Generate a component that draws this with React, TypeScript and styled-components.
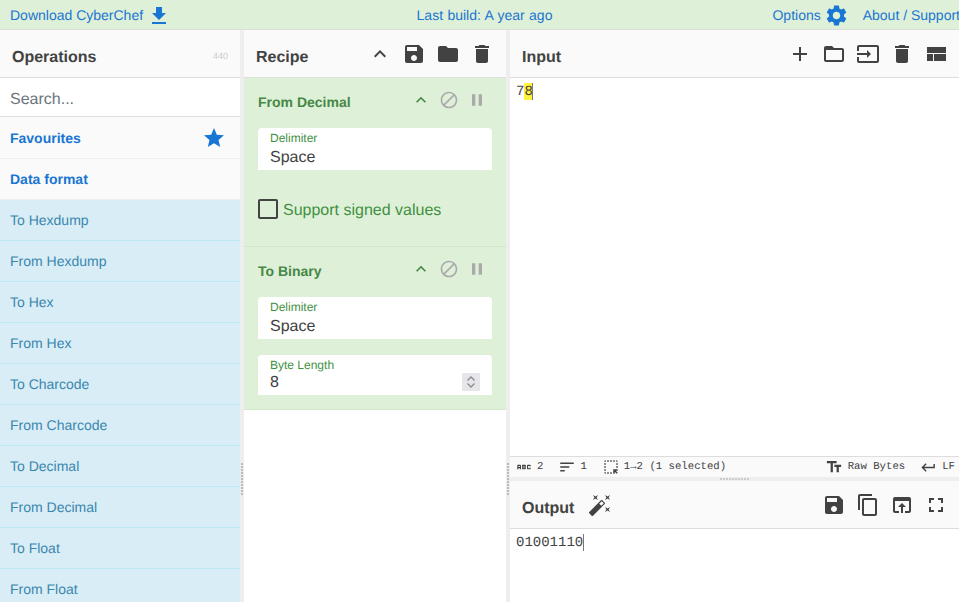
import React from "react";
import styled, { createGlobalStyle } from "styled-components";

const Global = createGlobalStyle`
  html, body { margin: 0; padding: 0; height: 100%; overflow: hidden; }
  body { font-family: "Liberation Sans", Arial, sans-serif; color: #424242; background: #fff; text-rendering: geometricPrecision; }
  * { box-sizing: border-box; }
`;

const P = {
  save: "M17 3H5c-1.11 0-2 .9-2 2v14c0 1.1.89 2 2 2h14c1.1 0 2-.9 2-2V7l-4-4zm-5 16c-1.66 0-3-1.34-3-3s1.34-3 3-3 3 1.34 3 3-1.34 3-3 3zm3-10H5V5h10v4z",
  folder: "M10 4H4c-1.1 0-1.99.9-1.99 2L2 18c0 1.1.9 2 2 2h16c1.1 0 2-.9 2-2V8c0-1.1-.9-2-2-2h-8l-2-2z",
  del: "M6 19c0 1.1.9 2 2 2h8c1.1 0 2-.9 2-2V7H6v12zM19 4h-3.5l-1-1h-5l-1 1H5v2h14V4z",
  less: "M12 8l-6 6 1.41 1.41L12 10.83l4.59 4.58L18 14z",
  add: "M19 13h-6v6h-2v-6H5v-2h6V5h2v6h6v2z",
  open: "M20 6h-8l-2-2H4c-1.1 0-1.99.9-1.99 2L2 18c0 1.1.9 2 2 2h16c1.1 0 2-.9 2-2V8c0-1.1-.9-2-2-2zm0 12H4V8h16v10z",
  input: "M21 3.01H3c-1.1 0-2 .9-2 2V9h2V4.99h18v14.03H3V15H1v4.01c0 1.1.9 1.98 2 1.98h18c1.1 0 2-.88 2-1.98v-14c0-1.11-.9-2-2-2zM11 16l4-4-4-4v3H1v2h10v3z",
  compact: "M3 19h6v-7H3v7zm7 0h12v-7H10v7zM3 5v6h19V5H3z",
  block: "M12 2C6.48 2 2 6.48 2 12s4.48 10 10 10 10-4.48 10-10S17.52 2 12 2zM4 12c0-4.42 3.58-8 8-8 1.85 0 3.55.63 4.9 1.69L5.69 16.9C4.63 15.55 4 13.85 4 12zm8 8c-1.85 0-3.55-.63-4.9-1.69L18.31 7.1C19.37 8.45 20 10.15 20 12c0 4.42-3.58 8-8 8z",
  pause: "M6 19h4V5H6v14zm8-14v14h4V5h-4z",
  star: "M12 17.27L18.18 21l-1.64-7.03L22 9.24l-7.19-.61L12 2 9.19 8.63 2 9.24l5.46 4.73L5.82 21z",
  download: "M19 9h-4V3H9v6H5l7 7 7-7zM5 18v2h14v-2H5z",
  gear: "M19.14 12.94c.04-.3.06-.61.06-.94 0-.32-.02-.64-.07-.94l2.03-1.58c.18-.14.23-.41.12-.61l-1.92-3.32c-.12-.22-.37-.29-.59-.22l-2.39.96c-.5-.38-1.03-.7-1.62-.94l-.36-2.54c-.04-.24-.24-.41-.48-.41h-3.84c-.24 0-.43.17-.47.41l-.36 2.54c-.59.24-1.13.57-1.62.94l-2.39-.96c-.22-.08-.47 0-.59.22L2.74 8.87c-.12.21-.08.47.12.61l2.03 1.58c-.05.3-.09.63-.09.94s.02.64.07.94l-2.03 1.58c-.18.14-.23.41-.12.61l1.92 3.32c.12.22.37.29.59.22l2.39-.96c.5.38 1.03.7 1.62.94l.36 2.54c.05.24.24.41.48.41h3.84c.24 0 .44-.17.47-.41l.36-2.54c.59-.24 1.13-.56 1.62-.94l2.39.96c.22.08.47 0 .59-.22l1.92-3.32c.12-.22.07-.47-.12-.61l-2.01-1.58zM12 15.6c-1.98 0-3.6-1.62-3.6-3.6s1.62-3.6 3.6-3.6 3.6 1.62 3.6 3.6-1.62 3.6-3.6 3.6z",
  copy: "M16 1H4c-1.1 0-2 .9-2 2v14h2V3h12V1zm3 4H8c-1.1 0-2 .9-2 2v14c0 1.1.9 2 2 2h11c1.1 0 2-.9 2-2V7c0-1.1-.9-2-2-2zm0 16H8V7h11v14z",
  browser: "M19 4H5c-1.11 0-2 .9-2 2v12c0 1.1.89 2 2 2h4v-2H5V8h14v10h-4v2h4c1.1 0 2-.9 2-2V6c0-1.1-.89-2-2-2zm-7 6l-4 4h3v6h2v-6h3l-4-4z",
  full: "M7 14H5v5h5v-2H7v-3zm-2-4h2V7h3V5H5v5zm12 7h-3v2h5v-5h-2v3zM14 5v2h3v3h2V5h-5z",
  wand: "M7.5 5.6L10 7 8.6 4.5 10 2 7.5 3.4 5 2l1.4 2.5L5 7zm12 9.8L17 14l1.4 2.5L17 19l2.5-1.4L22 19l-1.4-2.5L22 14zM22 2l-2.5 1.4L17 2l1.4 2.5L17 7l2.5-1.4L22 7l-1.4-2.5zm-7.63 5.29c-.39-.39-1.02-.39-1.41 0L1.29 18.96c-.39.39-.39 1.02 0 1.41l2.34 2.34c.39.39 1.02.39 1.41 0L16.7 11.05c.39-.39.39-1.02 0-1.41l-2.33-2.35zm-1.03 5.49l-2.12-2.12 2.44-2.44 2.12 2.12-2.44 2.44z",
  text: "M2.5 4v3h5v12h3V7h5V4h-13zm19 5h-9v3h3v7h3v-7h3V9z",
  ret: "M19 7v4H5.83l3.58-3.59L8 6l-6 6 6 6 1.41-1.41L5.83 13H21V7z",
  sort: "M3 18h6v-2H3v2zM3 6v2h18V6H3zm0 7h12v-2H3v2z",
  sel: "M17 5h-2V3h2v2zm-2 16h2v-2.59L19.59 21 21 19.59 18.41 17H21v-2h-6v6zm4-12h2V7h-2v2zm0 4h2v-2h-2v2zm-8 8h2v-2h-2v2zM7 5h2V3H7v2zM3 17h2v-2H3v2zm2 4v-2H3c0 1.1.9 2 2 2zM19 3v2h2c0-1.1-.9-2-2-2zm-8 2h2V3h-2v2zM3 9h2V7H3v2zm4 12h2v-2H7v2zm-4-8h2v-2H3v2zm0-8h2V3c-1.1 0-2 .9-2 2z",
  abc: "M21 11h-1.5v-.5h-2v3h2V13H21v1c0 .55-.45 1-1 1h-3c-.55 0-1-.45-1-1v-4c0-.55.45-1 1-1h3c.55 0 1 .45 1 1v1zM8 10v5H6.5v-1.5h-2V15H3v-5c0-.55.45-1 1-1h3c.55 0 1 .45 1 1zm-1.5.5h-2V12h2v-1.5zm7 1.5c.55 0 1 .45 1 1v1c0 .55-.45 1-1 1h-4V9h4c.55 0 1 .45 1 1v1c0 .55-.45 1-1 1zM11 10.5v.75h2v-.75h-2zm2 2.25h-2v.75h2v-.75z",
};

const Svg = styled.svg<{ $c?: string }>`
  display: block;
  flex: none;
  fill: ${(p) => p.$c ?? "#424242"};
`;
const Icon = ({ d, size = 24, color }: { d: string; size?: number; color?: string }) => (
  <Svg width={size} height={size} viewBox="0 0 24 24" $c={color}><path d={d} /></Svg>
);

const Page = styled.div`
  width: 959px;
  height: 602px;
  display: flex;
  flex-direction: column;
  overflow: hidden;
`;
const Banner = styled.header`
  height: 30px;
  flex: none;
  display: grid;
  grid-template-columns: 1fr auto 1fr;
  align-items: center;
  background: #dff0d8;
  border-bottom: 1px solid #ddd;
  font-size: 14px;
  color: #1976d2;
  white-space: nowrap;
`;
const BannerLeft = styled.div`
  display: flex;
  align-items: center;
  gap: 4px;
  padding-left: 10px;
`;
const BannerCenter = styled.div`
  margin-left: 10px;
  word-spacing: 0.5px;
`;
const BannerRight = styled.div`
  display: flex;
  align-items: center;
  justify-content: flex-end;
  margin-right: -1px;
`;
const BannerIcon = styled.span`
  padding-top: 2px;
`;
const GearSlot = styled.span`
  margin-left: 3px;
  padding-top: 2px;
`;
const AboutLink = styled.span`
  margin-left: 14px;
`;
const Workspace = styled.main`
  flex: 1;
  min-height: 0;
  display: grid;
  grid-template-columns: 240px 4px 262px 4px 1fr;
`;
const Column = styled.section`
  min-width: 0;
  min-height: 0;
  display: flex;
  flex-direction: column;
  overflow: hidden;
`;
const Gutter = styled.div`
  position: relative;
  background: #eee;
`;
const GripV = styled.span`
  position: absolute;
  left: 1px;
  top: 433px;
  width: 2px;
  height: 32px;
  background: repeating-linear-gradient(to bottom, #bbb 0 2px, transparent 2px 3px);
`;
const Heading = styled.div`
  height: 48px;
  flex: none;
  display: flex;
  align-items: center;
  background: #fafafa;
  border-bottom: 1px solid #ddd;
  padding: 0 12px;
  font-size: 16px;
  font-weight: 700;
  color: #424242;
`;
const HeadingTitle = styled.span`
  padding-top: 8px;
`;
const Spacer = styled.span`
  flex: 1;
`;
const Count = styled.span`
  font-size: 9px;
  font-weight: 400;
  color: #ccc;
  padding-top: 5px;
`;
const HeadIcons = styled.div<{ $right: number }>`
  display: flex;
  align-items: center;
  gap: 10px;
  padding-top: 1px;
  margin-right: ${(p) => p.$right}px;
`;
const WandSlot = styled.span`
  margin-left: 14px;
  padding-top: 1px;
`;
const Search = styled.div`
  height: 39px;
  flex: none;
  display: flex;
  align-items: center;
  padding: 5px 10px 0;
  background: #fff;
  border-bottom: 1px solid #ddd;
  font-size: 16px;
  color: #6c757d;
`;
const Category = styled.div<{ $h: number }>`
  height: ${(p) => p.$h}px;
  flex: none;
  display: flex;
  align-items: center;
  justify-content: space-between;
  padding: 0 14px 0 10px;
  background: #fafafa;
  border-bottom: 1px solid #eee;
  font-size: 14px;
  font-weight: 700;
  color: #1976d2;
`;
const OpList = styled.div`
  display: flex;
  flex-direction: column;
`;
const OpItem = styled.div`
  height: 41px;
  flex: none;
  display: flex;
  align-items: center;
  padding: 0 10px;
  background: #d9edf7;
  border-bottom: 1px solid #bce8f1;
  font-size: 14px;
  color: #3a87ad;
`;
const RecipeList = styled.div`
  flex: 1;
  background: #fff;
`;
const Op = styled.article`
  background: #dff0d8;
  border-bottom: 1px solid #d3e8c9;
  padding: 0 14px;
`;
const OpHead = styled.div`
  height: 50px;
  display: flex;
  align-items: center;
  font-size: 14px;
  font-weight: 700;
  color: #468847;
`;
const OpTitle = styled.span`
  flex: 1;
  padding-bottom: 2px;
`;
const OpIcons = styled.div`
  display: flex;
  align-items: center;
  gap: 8px;
  margin: -6px 5px 0 0;
`;
const Field = styled.div<{ $h: number; $mb: number }>`
  position: relative;
  height: ${(p) => p.$h}px;
  margin-bottom: ${(p) => p.$mb}px;
  padding: 3px 12px 0;
  background: #fff;
  border-radius: 4px 4px 0 0;
`;
const FieldLabel = styled.div`
  font-size: 12px;
  line-height: 14px;
  color: #3f9142;
`;
const FieldValue = styled.div<{ $mt: number }>`
  margin-top: ${(p) => p.$mt}px;
  font-size: 16px;
  line-height: 18px;
  color: #424242;
`;
const Spinner = styled.svg`
  position: absolute;
  right: 12px;
  top: 18px;
  display: block;
  background: #e6e6ea;
  fill: none;
  stroke: #8a8a8a;
  stroke-width: 1.3;
`;
const CheckRow = styled.label`
  display: flex;
  align-items: center;
  gap: 5px;
  height: 20px;
  margin-bottom: 27px;
  font-size: 16px;
  color: #3f9142;
`;
const CheckBox = styled.span`
  width: 20px;
  height: 20px;
  border: 2px solid #424242;
  border-radius: 2px;
`;
const CheckText = styled.span`
  padding-top: 4px;
`;
const Editor = styled.div<{ $h: number }>`
  height: ${(p) => p.$h}px;
  flex: none;
  padding: 5px 6px 0;
  background: #fff;
  font-family: "Liberation Mono", monospace;
  font-size: 14px;
  line-height: 19px;
  color: #424242;
  display: flex;
  align-items: flex-start;
`;
const Selected = styled.span`
  height: 17px;
  background: #fff23a;
`;
const Caret = styled.span`
  width: 1px;
  height: 17px;
  margin-left: -0.5px;
  background: #777;
`;
const StatusBar = styled.div`
  height: 21px;
  flex: none;
  display: flex;
  align-items: center;
  justify-content: space-between;
  padding: 0 4px 0 5px;
  background: #fafafa;
  border-top: 1px solid #ddd;
  font-family: "Liberation Mono", monospace;
  font-size: 10.67px;
  color: #424242;
`;
const StatusGroup = styled.div`
  display: flex;
  align-items: center;
  gap: 15px;
`;
const StatusItem = styled.span<{ $gap: number }>`
  display: flex;
  align-items: center;
  gap: ${(p) => p.$gap}px;
`;
const HSplit = styled.div`
  position: relative;
  height: 4px;
  flex: none;
  background: #eee;
`;
const GripH = styled.span`
  position: absolute;
  left: 210px;
  top: 1px;
  width: 30px;
  height: 2px;
  background: repeating-linear-gradient(to right, #ccc 0 2px, transparent 2px 3px);
`;

const ops = ["To Hexdump", "From Hexdump", "To Hex", "From Hex", "To Charcode", "From Charcode", "To Decimal", "From Decimal", "To Float", "From Float"];

const OperationHeader = ({ title }: { title: string }) => (
  <OpHead>
    <OpTitle>{title}</OpTitle>
    <OpIcons>
      <Icon d={P.less} size={20} color="#468847" />
      <Icon d={P.block} size={20} color="#aaa" />
      <Icon d={P.pause} size={20} color="#aaa" />
    </OpIcons>
  </OpHead>
);

export default function App() {
  return (
    <Page>
      <Global />
      <Banner>
        <BannerLeft>Download CyberChef <BannerIcon><Icon d={P.download} size={24} color="#1976d2" /></BannerIcon></BannerLeft>
        <BannerCenter>Last build: A year ago</BannerCenter>
        <BannerRight>
          Options<GearSlot><Icon d={P.gear} size={25} color="#1976d2" /></GearSlot>
          <AboutLink>About / Support</AboutLink>
        </BannerRight>
      </Banner>
      <Workspace>
        <Column>
          <Heading><HeadingTitle>Operations</HeadingTitle><Spacer /><Count>440</Count></Heading>
          <Search>Search...</Search>
          <Category $h={42}>Favourites <Icon d={P.star} size={24} color="#1976d2" /></Category>
          <Category $h={41}>Data format</Category>
          <OpList>{ops.map((o) => <OpItem key={o}>{o}</OpItem>)}</OpList>
        </Column>
        <Gutter><GripV /></Gutter>
        <Column>
          <Heading>
            <HeadingTitle>Recipe</HeadingTitle>
            <Spacer />
            <HeadIcons $right={0}>
              <Icon d={P.less} />
              <Icon d={P.save} />
              <Icon d={P.folder} />
              <Icon d={P.del} />
            </HeadIcons>
          </Heading>
          <Op>
            <OperationHeader title="From Decimal" />
            <Field $h={42} $mb={29}>
              <FieldLabel>Delimiter</FieldLabel>
              <FieldValue $mt={4}>Space</FieldValue>
            </Field>
            <CheckRow><CheckBox /><CheckText>Support signed values</CheckText></CheckRow>
          </Op>
          <Op>
            <OperationHeader title="To Binary" />
            <Field $h={42} $mb={16}>
              <FieldLabel>Delimiter</FieldLabel>
              <FieldValue $mt={4}>Space</FieldValue>
            </Field>
            <Field $h={40} $mb={14}>
              <FieldLabel>Byte Length</FieldLabel>
              <FieldValue $mt={2}>8</FieldValue>
              <Spinner width={18} height={18} viewBox="0 0 18 18">
                <polyline points="5.5,7.5 9,4 12.5,7.5" />
                <polyline points="5.5,10.5 9,14 12.5,10.5" />
              </Spinner>
            </Field>
          </Op>
          <RecipeList />
        </Column>
        <Gutter><GripV /></Gutter>
        <Column>
          <Heading>
            <HeadingTitle>Input</HeadingTitle>
            <Spacer />
            <HeadIcons $right={-1}>
              <Icon d={P.add} />
              <Icon d={P.open} />
              <Icon d={P.input} />
              <Icon d={P.del} />
              <Icon d={P.compact} />
            </HeadIcons>
          </Heading>
          <Editor $h={378}>7<Selected>8</Selected><Caret /></Editor>
          <StatusBar>
            <StatusGroup>
              <StatusItem $gap={4}><Icon d={P.abc} size={18} />2</StatusItem>
              <StatusItem $gap={4}><Icon d={P.sort} size={18} />1</StatusItem>
              <StatusItem $gap={4}><Icon d={P.sel} size={18} />1→2 (1 selected)</StatusItem>
            </StatusGroup>
            <StatusGroup>
              <StatusItem $gap={5}><Icon d={P.text} size={18} />Raw Bytes</StatusItem>
              <StatusItem $gap={5}><Icon d={P.ret} size={17} />LF</StatusItem>
            </StatusGroup>
          </StatusBar>
          <HSplit><GripH /></HSplit>
          <Heading>
            <HeadingTitle>Output</HeadingTitle>
            <WandSlot><Icon d={P.wand} /></WandSlot>
            <Spacer />
            <HeadIcons $right={-1}>
              <Icon d={P.save} />
              <Icon d={P.copy} />
              <Icon d={P.browser} />
              <Icon d={P.full} />
            </HeadIcons>
          </Heading>
          <Editor $h={73}>01001110<Caret /></Editor>
        </Column>
      </Workspace>
    </Page>
  );
}
